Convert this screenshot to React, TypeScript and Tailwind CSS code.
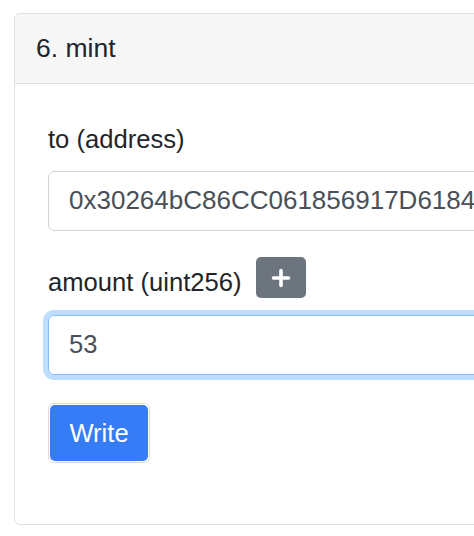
import React from "react";

export default function App() {
  const font = { fontFamily: '"Liberation Sans", Arial, Helvetica, sans-serif' };
  return (
    <div className="w-[474px] h-[536px] overflow-hidden bg-white" style={font}>
      <div className="pl-[14px] pt-[13px]">
        <div className="w-[700px] border border-[#dfdfdf] rounded-[6px] bg-white">
          <div className="h-[70px] bg-[#f7f7f8] border-b border-[#dfdfdf] rounded-t-[6px] flex items-center pl-[21px] text-[26.5px] text-[#212529]">
            6. mint
          </div>
          <div className="pl-[33px] pt-[37px] pb-[61px] text-[25.6px] leading-[37.5px] text-[#212529]">
            <div className="mb-[12px]">to (address)</div>
            <div className="h-[60px] w-[600px] border border-[#ced4da] rounded-[6px] flex items-center pl-[20px] text-[26px] text-[#495057] whitespace-nowrap overflow-hidden">
              0x30264bC86CC061856917D6184
            </div>
            <div className="mt-[33px] mb-[14px] h-[37.5px] flex items-center">
              <span>amount (uint256)</span>
              <span className="ml-[14px] mb-[9px] w-[50px] h-[41px] shrink-0 rounded-[5px] bg-[#6c757d] flex items-center justify-center">
                <svg width="20" height="20" viewBox="0 0 20 20">
                  <path d="M10 2.5v15M2.5 10h15" stroke="white" strokeWidth="3.6" strokeLinecap="round" />
                </svg>
              </span>
            </div>
            <div className="h-[60px] w-[600px] border border-[#80bdff] rounded-[6px] flex items-center pl-[20px] text-[#495057] shadow-[0_0_0_5px_rgba(0,123,255,0.25)]">
              53
            </div>
            <div className="mt-[28px] w-[102px] h-[60px] rounded-[6px] border border-[#dcdcdc] p-px">
              <div className="w-full h-full rounded-[5px] bg-[#367cf7] text-white flex items-center justify-center pt-[2px]">
                Write
              </div>
            </div>
          </div>
        </div>
      </div>
    </div>
  );
}
